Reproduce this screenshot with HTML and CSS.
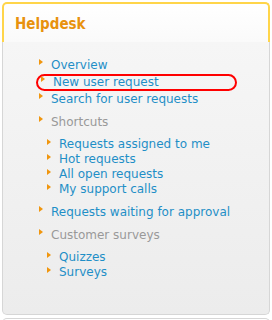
FILE: index.html
```html
<!DOCTYPE html>
<html lang="en">
<head>
  <meta charset="UTF-8">
  <title>Helpdesk</title>
  <meta name="viewport" content="width=device-width, initial-scale=1.0">
  <link rel="stylesheet" href="styles.css">
</head>
<body>
  <div class="panel">
    <div class="panel-head"><h2>Helpdesk</h2></div>
    <div class="panel-body">
      <ul class="menu">
        <li><a class="item" href="#">Overview</a></li>
        <li class="marked"><a class="item" href="#">New user request</a></li>
        <li><a class="item" href="#">Search for user requests</a></li>
        <li class="group">
          <span class="item label">Shortcuts</span>
          <ul class="sub">
            <li><a class="item" href="#">Requests assigned to me</a></li>
            <li><a class="item" href="#">Hot requests</a></li>
            <li><a class="item" href="#">All open requests</a></li>
            <li><a class="item" href="#">My support calls</a></li>
          </ul>
        </li>
        <li class="group"><a class="item" href="#">Requests waiting for approval</a></li>
        <li class="group">
          <span class="item label">Customer surveys</span>
          <ul class="sub">
            <li><a class="item" href="#">Quizzes</a></li>
            <li><a class="item" href="#">Surveys</a></li>
          </ul>
        </li>
      </ul>
    </div>
  </div>
  <div class="panel next"></div>
</body>
</html>
```

FILE: styles.css
```css
body {
  margin: 0;
  background: #fff;
  font-family: 'DejaVu Sans', Verdana, sans-serif;
  font-size: 12px;
  overflow: hidden;
}
.panel {
  margin: 2px 2px 0 2px;
  border-radius: 5px;
}
.panel-head {
  background: linear-gradient(to bottom, #fff, #fafafa);
  border: 2px solid #ffd54a;
  border-bottom: none;
  border-radius: 5px 5px 0 0;
  height: 38px;
  padding: 0 11px;
}
h2 {
  margin: 0;
  font-family: 'DejaVu Sans Condensed', 'DejaVu Sans', sans-serif;
  font-size: 15px;
  font-weight: bold;
  color: #e8920e;
  line-height: 18px;
  padding-top: 11px;
}
.panel-body {
  background: linear-gradient(to bottom, #f6f6f6, #ececec);
  border: 1px solid #d6d6d6;
  border-top: none;
  border-radius: 0 0 5px 5px;
  height: 257px;
  padding-top: 15px;
}
ul {
  list-style: none;
  margin: 0;
  padding: 0;
}
.menu {
  padding-left: 36px;
  line-height: 16.8px;
}
.item {
  color: #1f8fc7;
  text-decoration: none;
}
.item::before {
  content: '';
  display: inline-block;
  width: 0;
  height: 0;
  border-left: 4px solid #f0960e;
  border-top: 3px solid transparent;
  border-bottom: 3px solid transparent;
  margin-right: 8px;
  vertical-align: top;
  margin-top: 2px;
}
.label {
  color: #999;
}
.marked {
  border: 2px solid #f00;
  border-radius: 9px;
  margin-left: -3px;
  padding-left: 3px;
  width: 194px;
  line-height: 12.8px;
}
.marked .item::before {
  margin-top: 0;
}
.group {
  margin-top: 6.5px;
}
.sub {
  padding-left: 8px;
  margin-top: 6.5px;
  line-height: 15px;
}
.next {
  margin-top: 3px;
  height: 10px;
  border: 1px solid #d6d6d6;
  border-bottom: none;
}
```
